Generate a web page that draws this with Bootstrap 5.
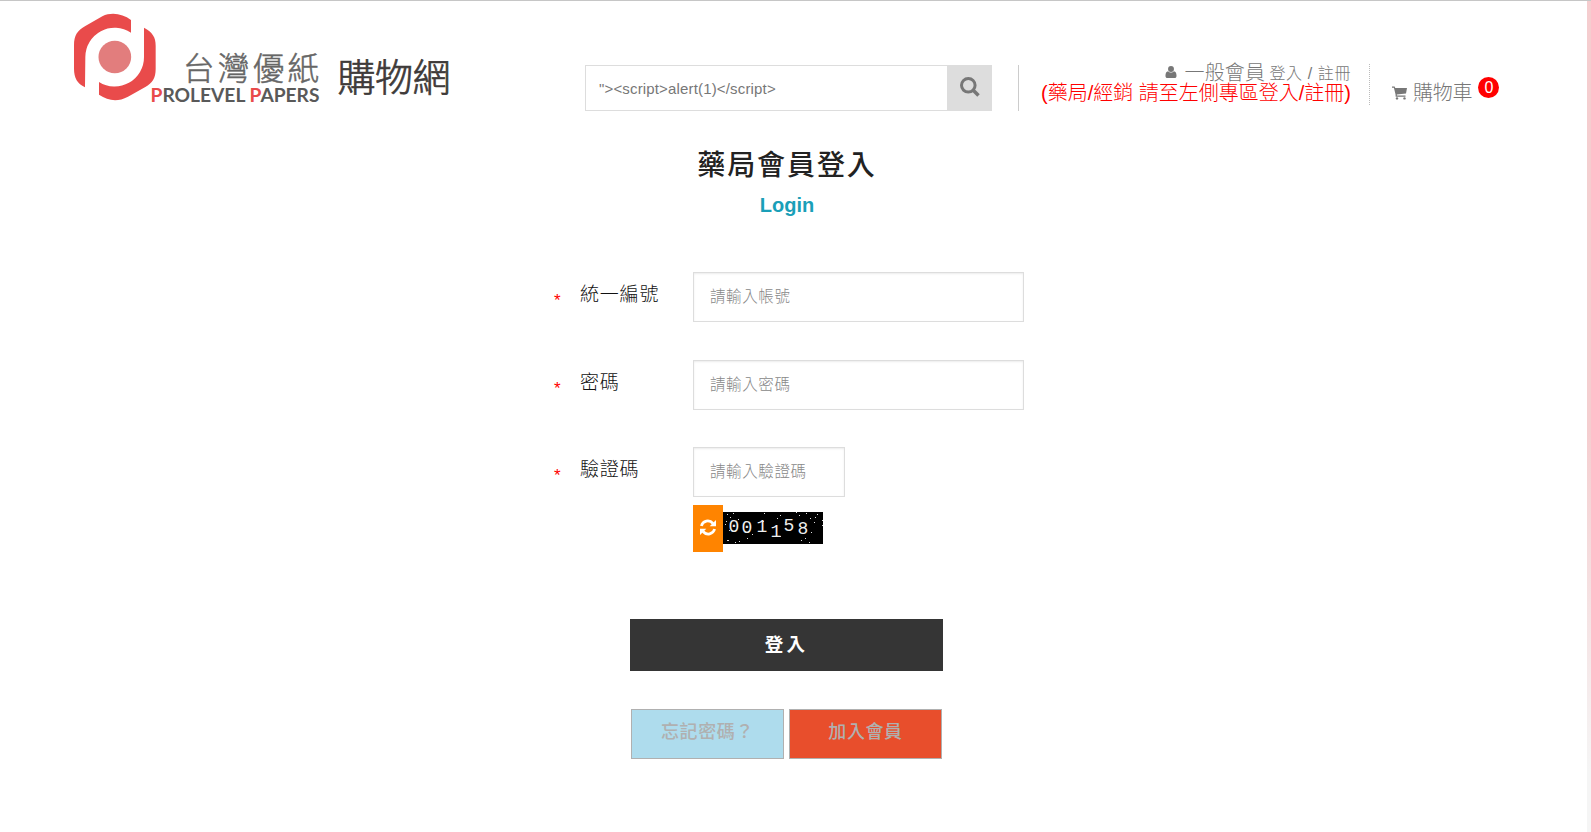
<!DOCTYPE html>
<html lang="zh-Hant">
<head>
<meta charset="utf-8">
<title>藥局會員登入</title>
<link href="https://cdn.jsdelivr.net/npm/bootstrap@5.3.0/dist/css/bootstrap.min.css" rel="stylesheet">
<style>
body{font-family:"Liberation Sans","Noto Sans CJK TC",sans-serif;color:#222;height:832px;overflow:hidden;border-top:1px solid #c6c6c6}
.cjk-thin,.form-label,.form-control{font-family:"Liberation Sans","Noto Sans CJK TC",sans-serif;font-weight:300}
.side-edge{width:4px;background:linear-gradient(#f5cdcf 0 430px,#f5f5f5 770px)}
.site-head{height:129px}
.logo-link{margin-left:74px;width:376px}
.search-box{margin:64px 0 0 135px;width:407px;height:46px}
.search-box .form-control{border:1px solid #ddd;border-right:0;font-size:15px;letter-spacing:.16px;color:#777;padding:2px 13px 0 13px}
.search-box .btn{width:45px;flex:none;background:#ddd;padding:0 0 3px;border:0}
.member-box{margin:64px 0 0 26px;width:352px;height:46px;border-left:1px solid #ccc;font-weight:300}
.member-text{width:332px;color:#777;line-height:18px;margin-top:-1px}
.member-text>div{height:20px}
.member-text .big,.red-note{font-size:20px}
.big{letter-spacing:.1px}
.cart-name{letter-spacing:-.2px}
.member-text .tiny-links{font-size:16px;letter-spacing:.6px;vertical-align:1px}
.member-text svg{vertical-align:2px;margin-right:3px}
.red-note{color:red;white-space:nowrap;letter-spacing:0}
.dots{height:41px;margin-top:-1px;border-left:1px dotted #bbb}
.cart-box{margin:74px 0 0 22px;color:#777;height:36px}
.cart-icon{margin-top:11px}
.cart-name{font-size:20px;line-height:20px;margin:8px 0 0 6px;white-space:nowrap}
.cart-count{width:21px;height:21px;margin:2px 0 0 6px;background:red;font-size:16px;line-height:22px}
.login-area{width:480px;margin-left:547px}
.login-area h1{font-size:28px;font-weight:500;letter-spacing:1.9px;line-height:36px;margin:18px 0 0}
.login-area h2{font-size:20px;font-weight:700;letter-spacing:0;color:#1a9fb8;line-height:24px;margin:9px 0 0}
.login-form{margin:55px 0 0 -1px}
.field{height:50px;margin-bottom:38px}
.field:nth-of-type(2){margin-bottom:37px}
.star{width:34px;padding:17px 0 0 8px;font-size:17px;color:red;line-height:24px}
.field .form-label{width:113px;font-size:19px;letter-spacing:.8px;line-height:26px;margin:10px 0 0;color:#111}
.field .form-control{width:331px;height:50px;border:1px solid #ddd;padding:0 15px 0 16px;font-size:15.5px;letter-spacing:.6px;box-shadow:inset 0 1px 2px #00000014}
.field .form-control::placeholder{color:#888;opacity:1}
.field .short-input{width:152px}
.captcha{margin:-30px 0 0 147px;height:47px}
.captcha-pic{margin-bottom:2px}
.refresh{width:30px;height:47px;background:#ff8400;border:0;padding:0 0 3px}
.go{width:313px;height:52px;margin:67px 0 0 84px;background:#353535!important;color:#fff!important;font-size:18.5px;font-weight:700;letter-spacing:3.2px}
.pair{margin:38px 0 0 85px;gap:5px}
.pair .btn{width:153px;height:50px;border:1px solid #b0b0b0;color:#b0b0b0;font-size:18px;letter-spacing:.6px;font-weight:500;padding:0 0 3px}
.blue-btn,.blue-btn:hover{background:#aedced}
.red-btn,.red-btn:hover{background:#e84e2c}
</style>
</head>
<body class="bg-white">
<div class="d-flex h-100">
<div class="flex-grow-1">
<header class="site-head d-flex align-items-start">
  <a class="logo-link" href="#"><svg class="d-block" width="380" height="112" viewBox="74 1 380 112">
    <g transform="translate(60 0) scale(.33333)">
      <path fill="#e94b4b" d="M75 262C52 250 42 235 42 205V137C42 105 52 92 76 78L127 49C156 35 188 42 213 60V98A88 88 0 0 0 76 171Z"/>
      <path fill="#e94b4b" d="M252 83C278 97 287 112 287 137V207C287 235 277 249 256 261L204 290C171 307 145 302 117 284V246A88 88 0 0 0 252 171Z"/>
      <circle cx="164.500" cy="171" r="49" fill="#e27d7d"/>
    </g>
    <g font-family="'Noto Sans CJK TC',sans-serif" font-weight="300" stroke-width=".5">
      <text x="183" y="80" font-size="31.500" fill="#666" stroke="#666" textLength="136">台灣優紙</text>
      <text x="337.500" y="91" font-size="38" fill="#3e3a39" stroke="#3e3a39" stroke-width=".7" textLength="113">購物網</text>
    </g>
    <text x="150.500" y="101.700" font-family="Lato,sans-serif" font-weight="700" font-size="19.500" fill="#595959" textLength="169" lengthAdjust="spacingAndGlyphs"><tspan fill="#e94b4b">P</tspan>ROLEVEL <tspan fill="#e94b4b">P</tspan>APERS</text>
  </svg></a>
  <form class="search-box d-flex">
    <input class="form-control rounded-0" type="text" value="&quot;&gt;&lt;script&gt;alert(1)&lt;/script&gt;">
    <button class="btn rounded-0" type="button" aria-label="搜尋"><svg width="20" height="20" viewBox="0 0 20 20" fill="none" stroke="#777" stroke-width="3"><circle cx="8.300" cy="8.300" r="6.800"/><path d="M13 13L18.500 18.500" stroke-width="3.600"/></svg></button>
  </form>
  <div class="member-box d-flex">
    <div class="member-text text-end">
      <div><svg width="12" height="12" viewBox="0 0 12 13" fill="#777"><circle cx="6" cy="3.200" r="3.200"/><path d="M2.800 5.600C1 6 0 7.500 0 10.500C0 12 .8 13 2.200 13H9.800C11.200 13 12 12 12 10.500C12 7.500 11 6 9.200 5.600C7.500 7.600 4.500 7.600 2.800 5.600Z"/></svg> <span class="big">一般會員</span> <span class="tiny-links">登入 / 註冊</span></div>
      <div class="red-note">(藥局/經銷 請至左側專區登入/註冊)</div>
    </div>
    <div class="dots ms-auto"></div>
  </div>
  <div class="cart-box d-flex">
    <svg class="cart-icon" width="15" height="14" viewBox="0 0 15 14" fill="#777"><path d="M0 .5H2.600L3.300 2H15L14 7.600L4.800 8.600L4.900 9.600H13.500V10.800H3.700L3.500 8.200L1.900 1.700H0Z"/><circle cx="5" cy="12.400" r="1.200"/><circle cx="12.500" cy="12.400" r="1.200"/></svg>
    <span class="cart-name cjk-thin">購物車</span><span class="cart-count rounded-circle text-white text-center">0</span>
  </div>
</header>
<main class="login-area">
  <h1 class="text-center">藥局會員登入</h1>
  <h2 class="text-center">Login</h2>
  <form class="login-form">
    <div class="field d-flex"><span class="star">*</span><label class="form-label">統一編號</label><input class="form-control rounded-0" placeholder="請輸入帳號"></div>
    <div class="field d-flex"><span class="star">*</span><label class="form-label">密碼</label><input class="form-control rounded-0" placeholder="請輸入密碼"></div>
    <div class="field d-flex"><span class="star">*</span><label class="form-label">驗證碼</label><input class="form-control rounded-0 short-input" placeholder="請輸入驗證碼"></div>
    <div class="captcha d-flex align-items-center">
      <button class="refresh" type="button" aria-label="更新"><svg class="d-block mx-auto" width="16" height="17" viewBox="0 0 16 16" fill="none" stroke="#fff" stroke-width="2.700"><path d="M1.400 6.500C2.700 1.200 9.300-.3 13 4"/><path d="M14.600 9.500C13.300 14.800 6.700 16.300 3 12"/><path fill="#fff" stroke="none" d="M16 .5V6.800H9.700ZM0 15.500V9.200H6.300Z"/></svg></button>
      <svg class="captcha-pic" width="100" height="32" viewBox="0 0 100 32"><rect width="100" height="32"/>
        <g font-family="'Liberation Mono',monospace" font-size="18" fill="#eee"><text x="5.500" y="19.500">0</text><text x="18.500" y="21">0</text><text x="33.500" y="20">1</text><text x="47.500" y="25">1</text><text x="60.500" y="18.500">5</text><text x="74.500" y="21.500">8</text></g>
        <path stroke="#ddd" d="M4 2.500h1M7 5.500h1M10 1.500h1M15 7.500h1M3 9.500h1M41 1.500h1M40 9.500h1M54 6.500h1M57 3.500h1M73 .5h1M76 3.500h1M83 1.500h1M87 6.500h1M94 2.500h1M91 10.500h1M99 8.500h1M92 5.500h1M6 18.500h1M12 30.500h1M4 28.500h2M16 29.500h1M24 26.500h1M29 22.500h1M57 24.500h1M78 28.500h1M82 26.500h1M86 30.500h1M88 20.500h1M10 14.500h1M62 10.500h1M2 12.500h1M99 13.500h1"/>
      </svg>
    </div>
    <button class="go btn rounded-0 d-block" type="button">登入</button>
    <div class="pair d-flex"><a class="btn rounded-0 blue-btn d-flex align-items-center justify-content-center" href="#">忘記密碼？</a><a class="btn rounded-0 red-btn d-flex align-items-center justify-content-center" href="#">加入會員</a></div>
  </form>
</main>
</div>
<div class="side-edge flex-shrink-0"></div>
</div>
<script src="https://cdn.jsdelivr.net/npm/bootstrap@5.3.0/dist/js/bootstrap.bundle.min.js"></script>
</body>
</html>
